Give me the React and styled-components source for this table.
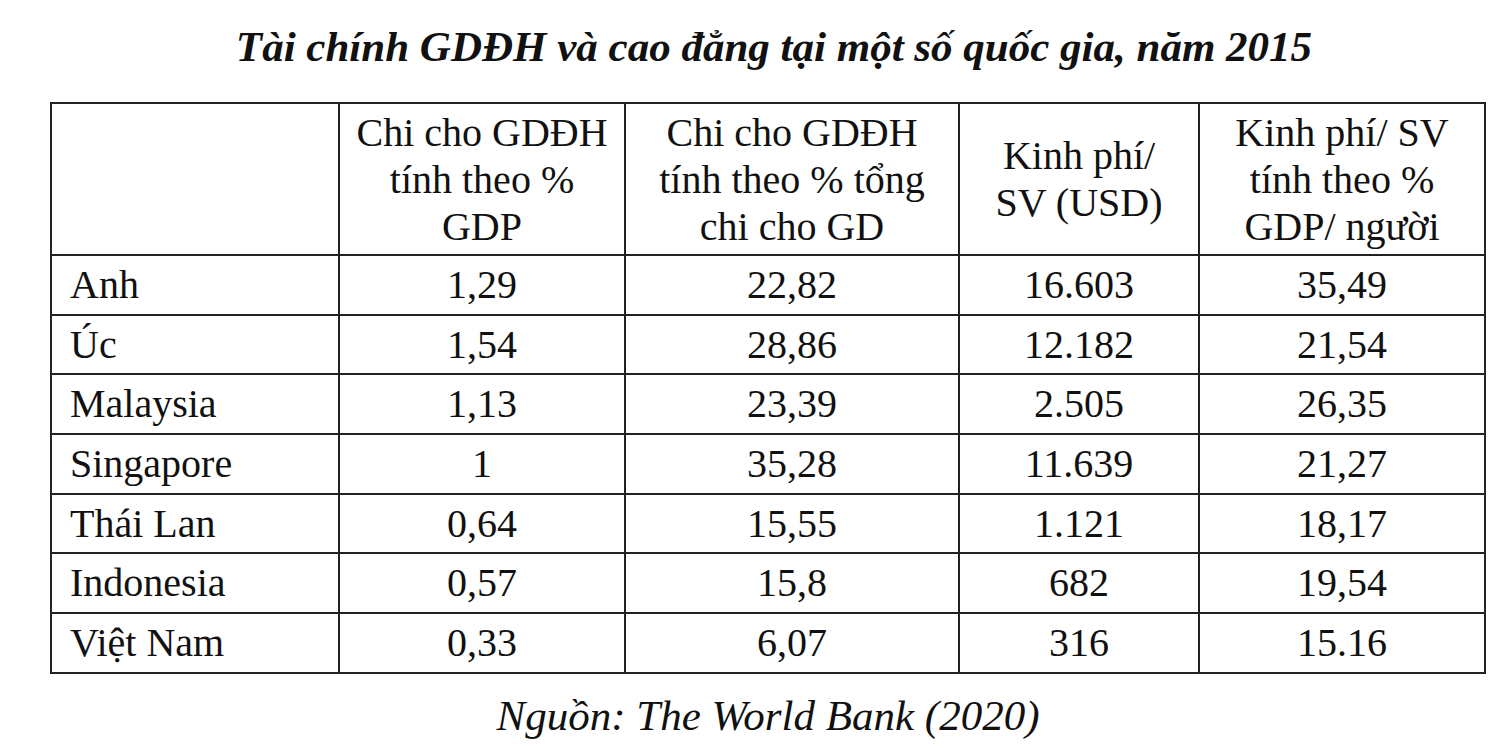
import React from "react"
import styled, { createGlobalStyle } from "styled-components"

const serif = `"Liberation Serif", "Times New Roman", Times, serif`

const GlobalStyle = createGlobalStyle`
  html, body {
    margin: 0;
    padding: 0;
    background: #ffffff;
  }
  body {
    font-family: ${serif};
    color: #111;
  }
`

const Page = styled.main`
  width: 1434px;
  padding: 0 0 0 50px;
  display: flex;
  flex-direction: column;
`

const Title = styled.h1`
  margin: 0;
  padding: 23px 0 0 14px;
  height: 102px;
  box-sizing: border-box;
  text-align: center;
  font-family: ${serif};
  font-size: 43px;
  line-height: 48px;
  font-weight: bold;
  font-style: italic;
`

const Table = styled.table`
  width: 1434px;
  border-collapse: collapse;
  table-layout: fixed;
  font-family: ${serif};
  font-size: 40px;
  color: #111;
`

const HeadCell = styled.th`
  border: 2px solid #222;
  font-family: ${serif};
  font-weight: normal;
  text-align: center;
  vertical-align: middle;
  line-height: 47px;
  padding: 0 6px;
  height: 150px;
`

const Cell = styled.td`
  border: 2px solid #222;
  font-family: ${serif};
  height: 57.7px;
  padding: 0 ${p => (p.$name ? "18px" : "6px")};
  text-align: ${p => (p.$name ? "left" : "center")};
  vertical-align: middle;
  line-height: 46px;
`

const Source = styled.p`
  margin: 0;
  padding: 18px 0 0 2px;
  text-align: center;
  font-family: ${serif};
  font-size: 43px;
  line-height: 48px;
  font-style: italic;
`

const columns = [288, 286, 334, 240, 286]

const headers = [
  "",
  ["Chi cho GDĐH", "tính theo %", "GDP"],
  ["Chi cho GDĐH", "tính theo % tổng", "chi cho GD"],
  ["Kinh phí/", "SV (USD)"],
  ["Kinh phí/ SV", "tính theo %", "GDP/ người"],
]

const rows = [
  ["Anh", "1,29", "22,82", "16.603", "35,49"],
  ["Úc", "1,54", "28,86", "12.182", "21,54"],
  ["Malaysia", "1,13", "23,39", "2.505", "26,35"],
  ["Singapore", "1", "35,28", "11.639", "21,27"],
  ["Thái Lan", "0,64", "15,55", "1.121", "18,17"],
  ["Indonesia", "0,57", "15,8", "682", "19,54"],
  ["Việt Nam", "0,33", "6,07", "316", "15.16"],
]

const App = () => {
  return (
    <Page>
      <GlobalStyle />
      <Title>Tài chính GDĐH và cao đẳng tại một số quốc gia, năm 2015</Title>
      <Table>
        <colgroup>
          {columns.map((w, i) => (
            <col key={i} style={{ width: w }} />
          ))}
        </colgroup>
        <thead>
          <tr>
            {headers.map((h, i) => (
              <HeadCell key={i}>
                {Array.isArray(h)
                  ? h.map((line, j) => (
                      <React.Fragment key={j}>
                        {line}
                        {j < h.length - 1 && <br />}
                      </React.Fragment>
                    ))
                  : h}
              </HeadCell>
            ))}
          </tr>
        </thead>
        <tbody>
          {rows.map(r => (
            <tr key={r[0]}>
              {r.map((v, i) => (
                <Cell key={i} $name={i === 0}>
                  {v}
                </Cell>
              ))}
            </tr>
          ))}
        </tbody>
      </Table>
      <Source>Nguồn: The World Bank (2020)</Source>
    </Page>
  )
}

export default App
